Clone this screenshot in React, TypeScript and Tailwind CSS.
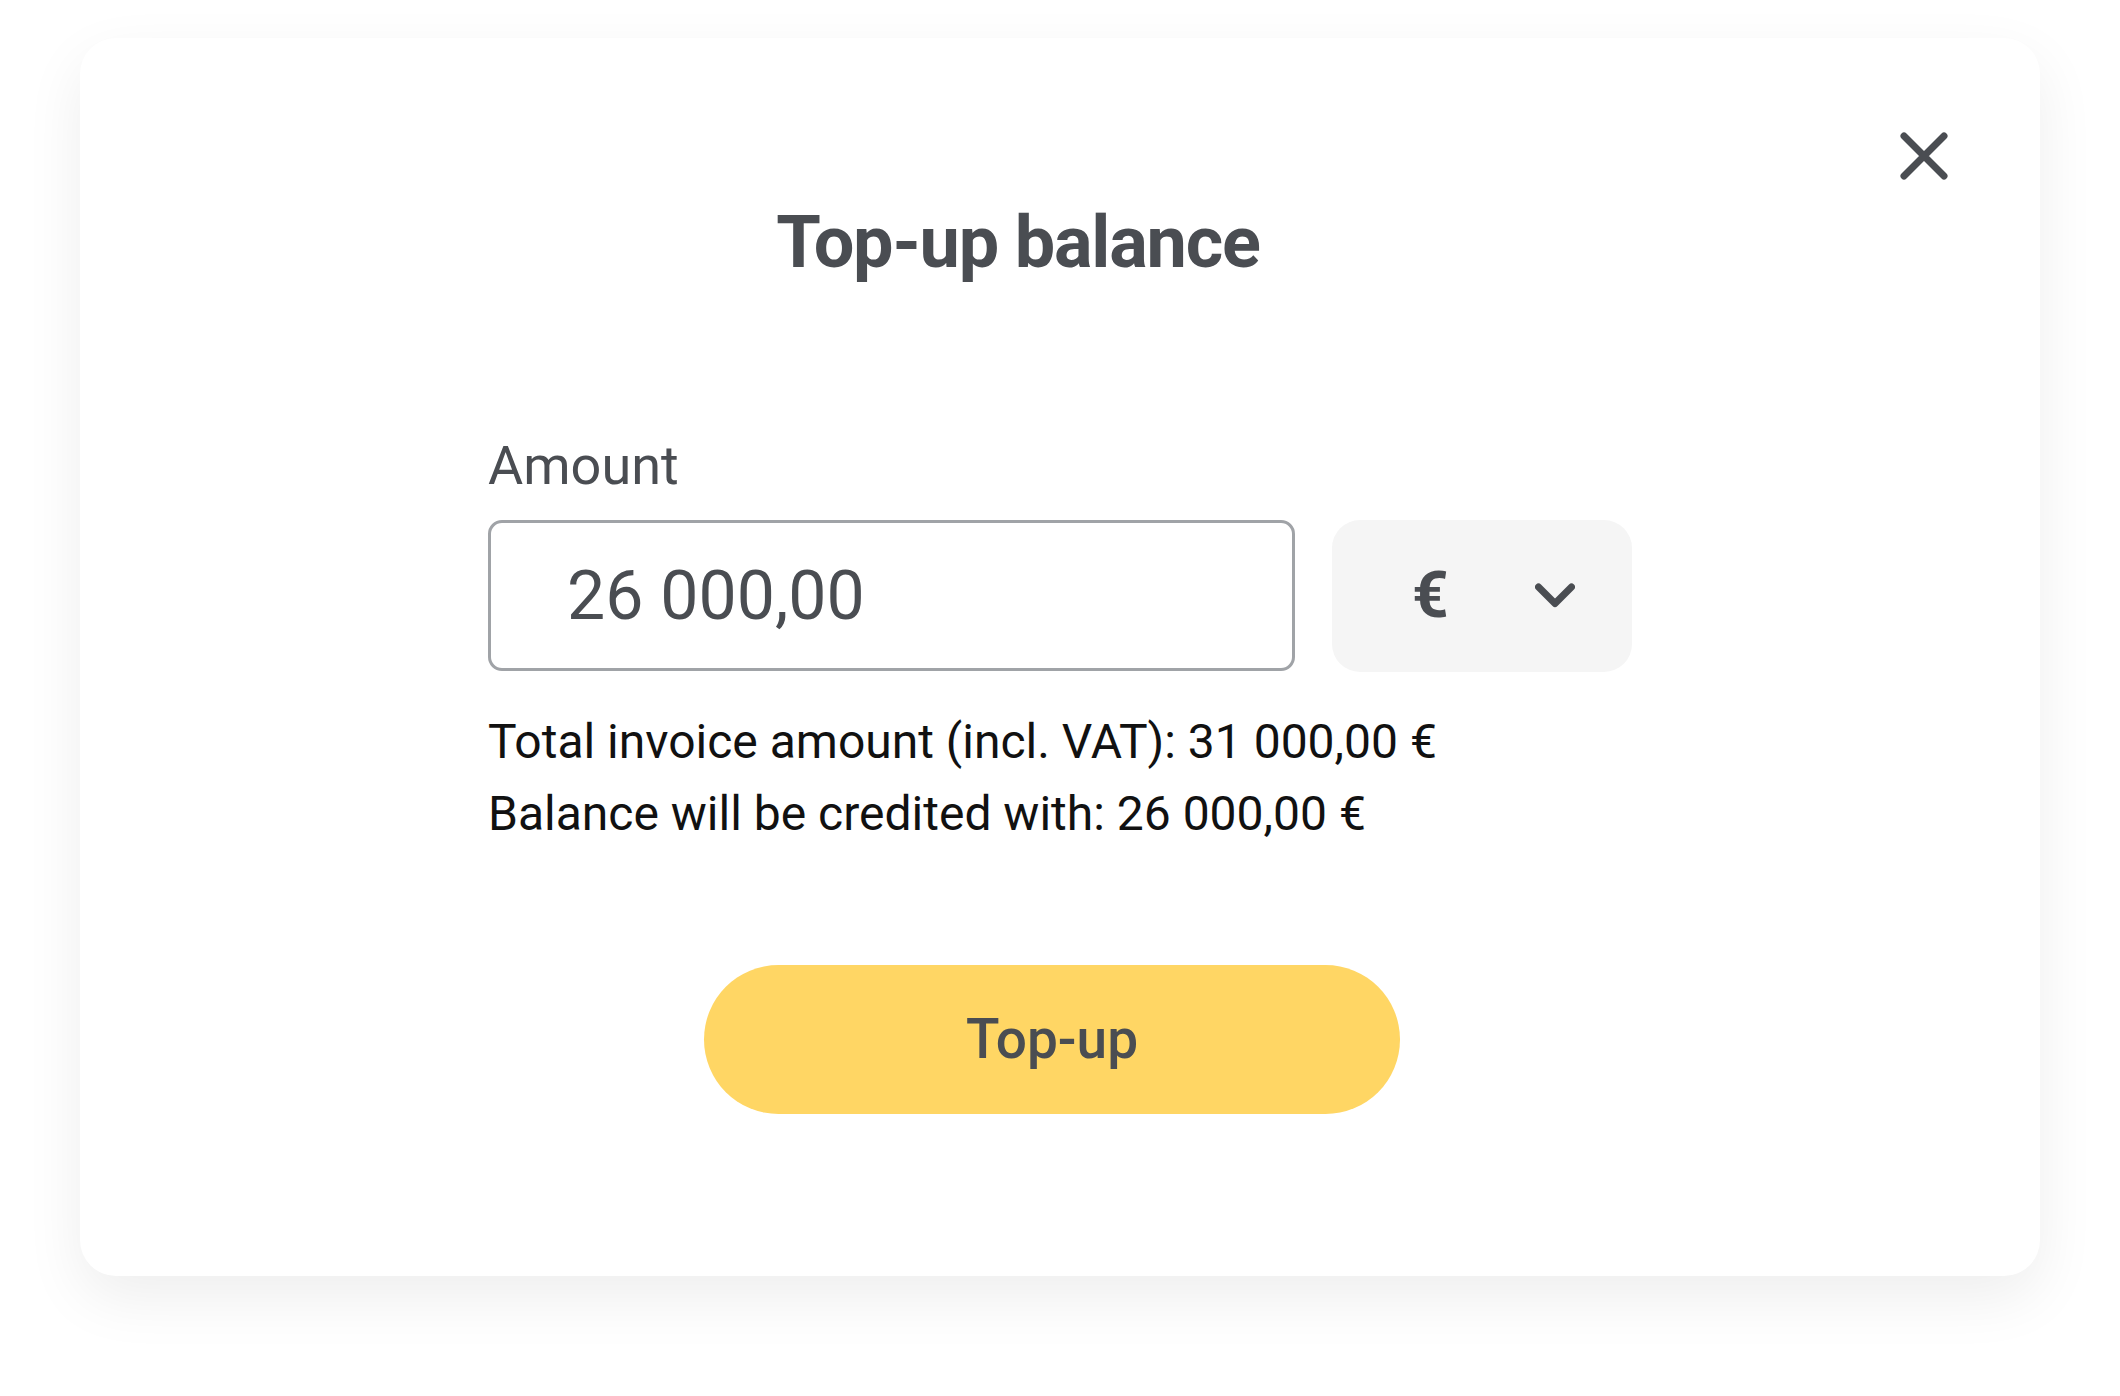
import React from "react";

const ink = "text-[#4a4d52]";

function CloseIcon() {
    return (
        <svg width="48" height="48" viewBox="0 0 48 48" fill="none">
            <path d="M4 4L44 44M44 4L4 44" stroke="#4a4d52" strokeWidth="7" strokeLinecap="round" />
        </svg>
    );
}

function Chevron() {
    return (
        <svg width="40" height="26" viewBox="0 0 40 26" fill="none">
            <path d="M3.5 4L20 20.5L36.5 4" stroke="#4a4d52" strokeWidth="7" strokeLinecap="round" strokeLinejoin="round" />
        </svg>
    );
}

export default function App() {
    return (
        <div className="min-h-screen bg-white pt-[38px] pl-[80px] font-['Roboto',sans-serif]">
            <div className="relative w-[1960px] h-[1238px] rounded-[36px] bg-white shadow-[0_22px_60px_rgba(0,0,0,0.07)] flex flex-col">
                {/* Close */}
                <button className="absolute top-[94px] right-[92px]">
                    <CloseIcon />
                </button>

                {/* Title */}
                <h1 className={`mt-[162px] pr-[84px] text-center text-[72px] leading-[86px] font-bold tracking-[-1.2px] ${ink}`}>
                    Top-up balance
                </h1>

                {/* Form */}
                <div className="mx-auto w-[1144px] flex flex-col items-start mt-[148px]">
                    <label className={`text-[54px] leading-[64px] ${ink}`}>Amount</label>

                    <div className="mt-[22px] flex gap-[37px]">
                        <div className="w-[807px] h-[151px] border-[3px] border-[#a0a3a7] rounded-[14px] flex items-center pl-[76px]">
                            <span className={`text-[68px] ${ink}`}>26 000,00</span>
                        </div>
                        <div className="w-[300px] h-[152px] rounded-[28px] bg-[#f5f5f5] flex items-center pl-[80px] gap-[86px]">
                            <span className={`text-[64px] font-bold leading-none ${ink}`}>€</span>
                            <Chevron />
                        </div>
                    </div>

                    <div className="mt-[34px] text-[48px] leading-[72px] text-[#111]">
                        <p>Total invoice amount (incl. VAT): 31 000,00 €</p>
                        <p>Balance will be credited with: 26 000,00 €</p>
                    </div>

                    <button className={`mt-[115px] ml-[216px] w-[696px] h-[149px] rounded-full bg-[#ffd664] text-[55px] font-medium ${ink}`}>
                        Top-up
                    </button>
                </div>
            </div>
        </div>
    );
}
